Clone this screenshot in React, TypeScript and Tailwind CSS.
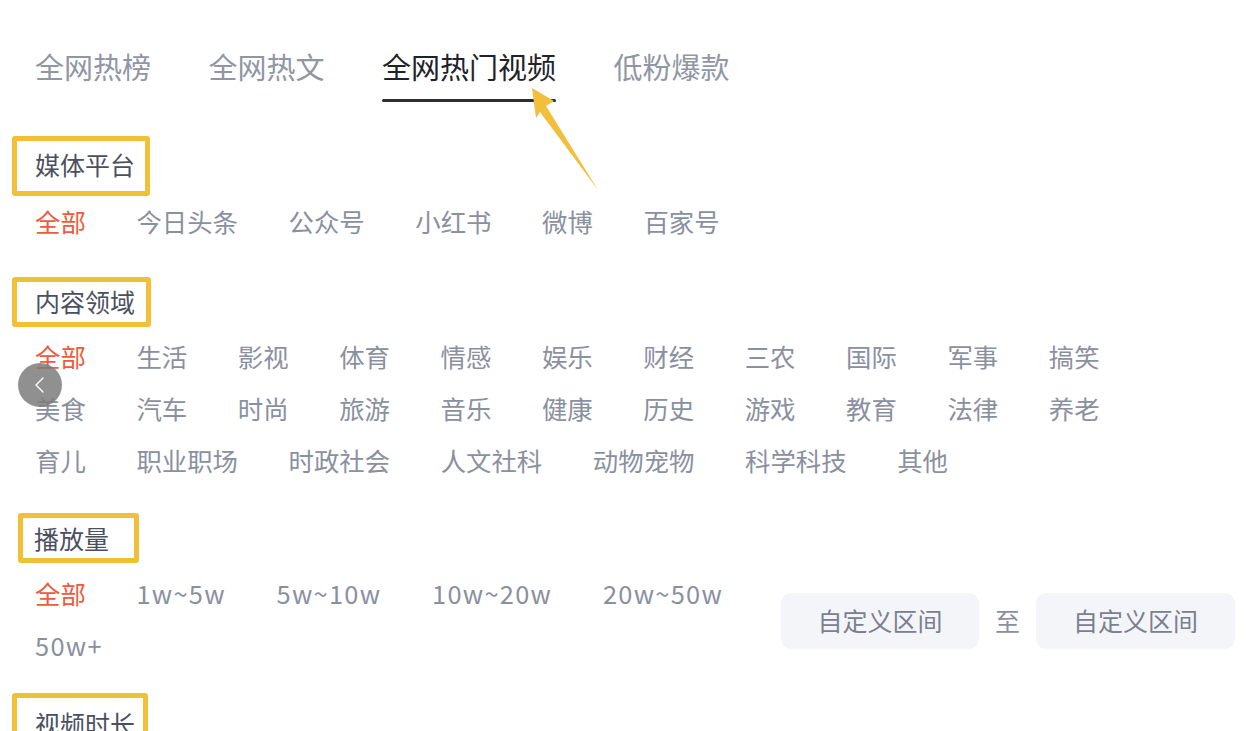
import React from "react";

const font = { fontFamily: '"Noto Sans CJK SC", "Noto Sans", sans-serif' };

const tabs = ["全网热榜", "全网热文", "全网热门视频", "低粉爆款"];
const platforms = ["全部", "今日头条", "公众号", "小红书", "微博", "百家号"];
const domains = [
  "全部", "生活", "影视", "体育", "情感", "娱乐", "财经", "三农", "国际", "军事", "搞笑",
  "美食", "汽车", "时尚", "旅游", "音乐", "健康", "历史", "游戏", "教育", "法律", "养老",
  "育儿", "职业职场", "时政社会", "人文社科", "动物宠物", "科学科技", "其他",
];
const plays = ["全部", "1w~5w", "5w~10w", "10w~20w", "20w~50w", "50w+"];

const Label = ({ text, className = "" }: { text: string; className?: string }) => (
  <div
    className={`inline-block border-[5px] border-[#f2c037] rounded-[3px] text-[25px] text-[#4b5060] ${className}`}
  >
    {text}
  </div>
);

const Options = ({ items, className = "" }: { items: string[]; className?: string }) => (
  <div className={`flex flex-wrap gap-x-[50.6px] text-[25.4px] ${className}`}>
    {items.map((item, i) => (
      <span
        key={item + i}
        className={`h-[52px] leading-[48px] ${i === 0 ? "text-[#f05a3c]" : "text-[#8a90a0]"} ${
          /w/.test(item) ? "tracking-[1.3px]" : ""
        }`}
      >
        {item}
      </span>
    ))}
  </div>
);

export default function App() {
  return (
    <div className="relative w-[1246px] h-[731px] overflow-hidden bg-white" style={font}>
      {/* tabs */}
      <div className="flex gap-x-[57.5px] pl-[35px] pt-[48px]">
        {tabs.map((t, i) => (
          <div key={t} className="flex flex-col">
            <span
              className={`h-[40px] leading-[36px] text-[29px] ${
                i === 2 ? "text-[#1f2329]" : "text-[#9096a4]"
              }`}
            >
              {t}
            </span>
            <div className={`mt-[11px] h-[3px] rounded-full ${i === 2 ? "bg-[#2a2d36]" : "bg-transparent"}`} />
          </div>
        ))}
      </div>

      <div className="pl-[12px] pr-[11px]">
        <Label text="媒体平台" className="mt-[34px] h-[60px] leading-[47px] pl-[18px] pr-[10px]" />
        <Options items={platforms} className="mt-[1px] pl-[23px]" />

        <div>
          <Label text="内容领域" className="mt-[28px] h-[50px] leading-[38px] pl-[18px] pr-[11px]" />
        </div>
        <Options items={domains} className="mt-[5px] pl-[23px] w-[1130px]" />

        <div>
          <Label text="播放量" className="mt-[25px] ml-[6px] h-[50px] leading-[40px] pl-[11px] pr-[25px]" />
        </div>
        <div className="mt-[6px] flex items-center">
          <Options items={plays} className="flex-1 pl-[23px]" />
          <div className="flex items-center gap-x-[16px] text-[25px]">
            <div className="w-[198px] h-[56px] rounded-[10px] bg-[#f4f5f8] text-[#7a8092] flex items-center justify-center">
              自定义区间
            </div>
            <span className="text-[#8a90a0]">至</span>
            <div className="w-[199px] h-[56px] rounded-[10px] bg-[#f4f5f8] text-[#7a8092] flex items-center justify-center">
              自定义区间
            </div>
          </div>
        </div>

        <div>
          <Label text="视频时长" className="mt-[20px] h-[60px] leading-[50px] pl-[18px] pr-[8px]" />
        </div>
      </div>

      {/* back button */}
      <div className="absolute left-[18px] top-[363px] w-[44px] h-[44px] rounded-full bg-[#7d7d7d]/85 flex items-center justify-center">
        <svg width="16" height="18" viewBox="0 0 16 18" fill="none">
          <path d="M11 2 L4 9 L11 16" stroke="white" strokeWidth="1.4" strokeLinecap="round" strokeLinejoin="round" />
        </svg>
      </div>

      {/* annotation arrow */}
      <svg className="absolute left-0 top-0 pointer-events-none" width="1246" height="731">
        <polygon points="532,88 554,101 546,106 598,190 540,112 536,118" fill="#f2bf3a" />
      </svg>
    </div>
  );
}
